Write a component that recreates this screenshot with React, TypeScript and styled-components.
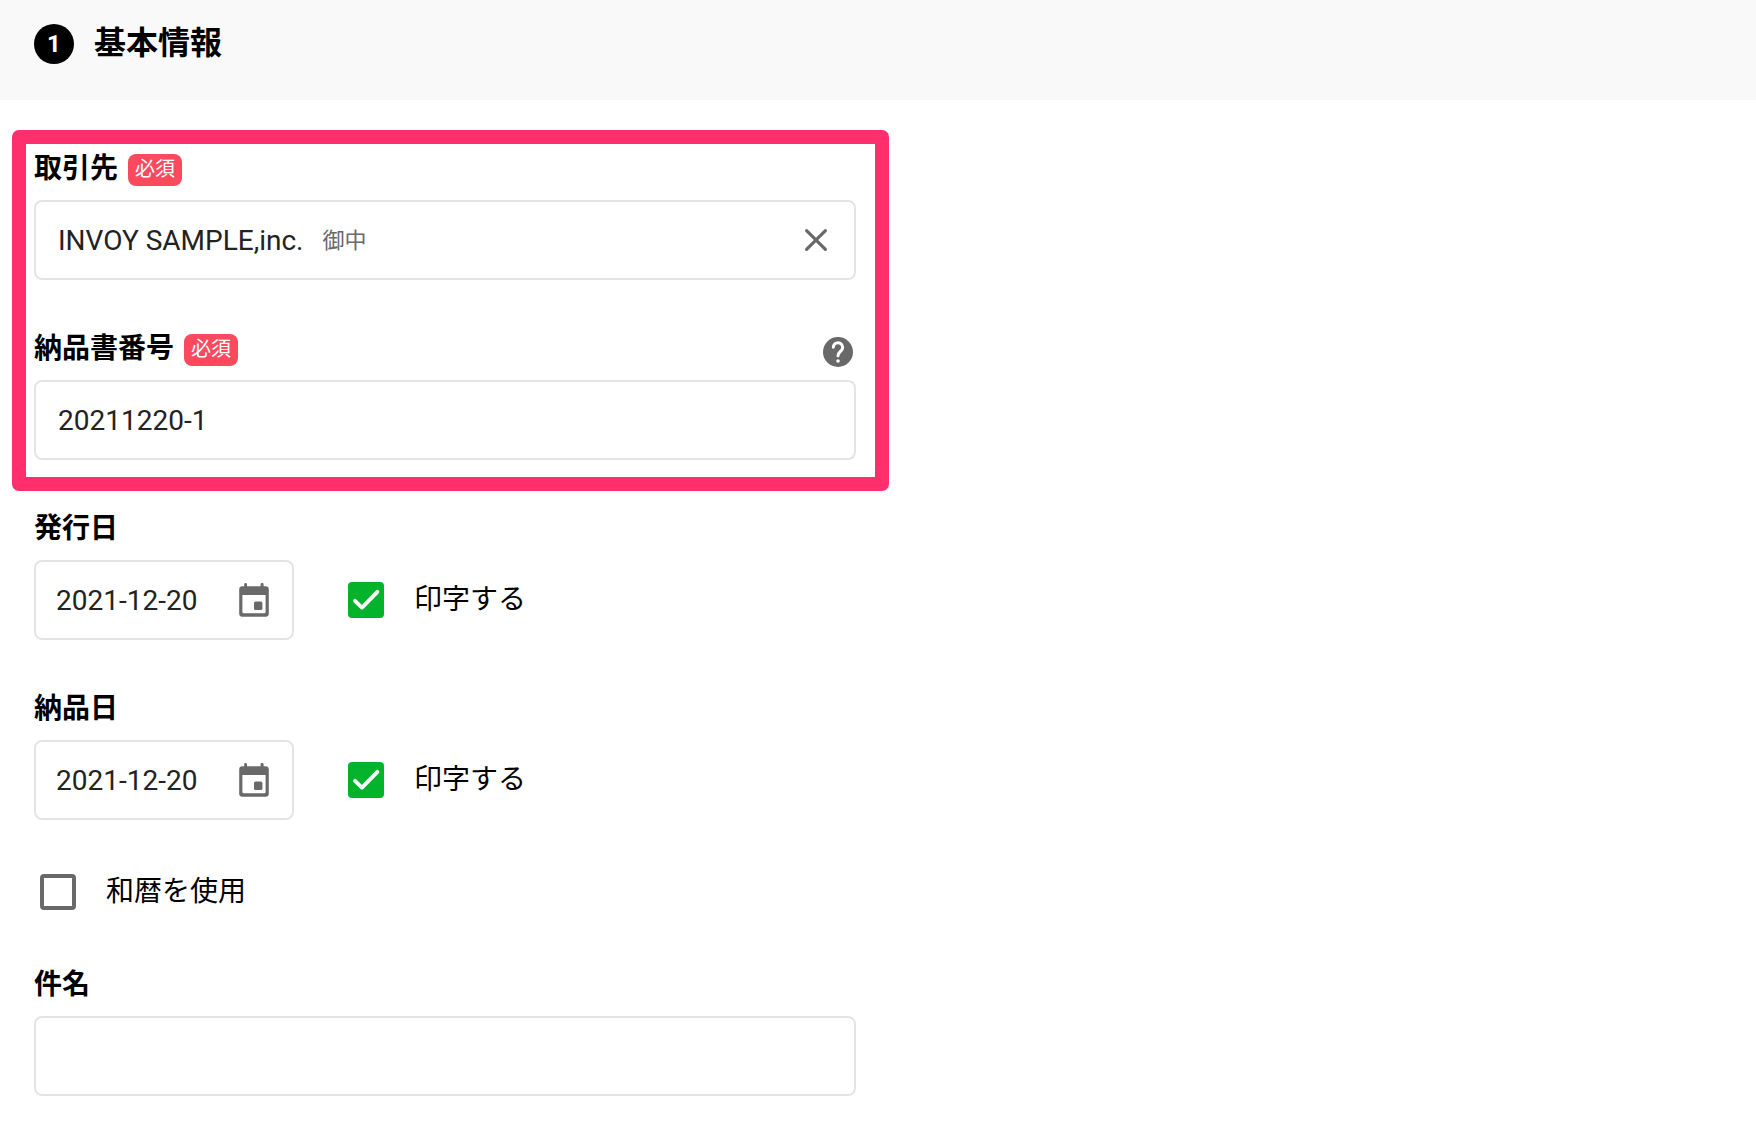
import React, { useState } from "react";
import styled, { createGlobalStyle } from "styled-components";

const color = {
  text: "#000000",
  value: "#222222",
  muted: "#696969",
  line: "#e4e4e4",
  bar: "#f9f9f9",
  required: "#fb4a5e",
  frame: "#ff2f6d",
  green: "#04b32c",
};

const GlobalStyle = createGlobalStyle`
  *, *::before, *::after { box-sizing: border-box; }
  body {
    margin: 0;
    background: #ffffff;
    color: ${color.text};
    font-family: Roboto, "Noto Sans CJK JP", sans-serif;
  }
  button, input { font: inherit; color: inherit; }
`;

const SectionBar = styled.header`
  display: flex;
  align-items: flex-start;
  gap: 20px;
  height: 100px;
  padding: 24px 34px;
  background: ${color.bar};
`;

const StepNumber = styled.span`
  flex: none;
  width: 40px;
  height: 40px;
  border-radius: 50%;
  background: #000000;
  color: #ffffff;
  font-size: 24px;
  font-weight: 700;
  line-height: 40px;
  text-align: center;
`;

const Title = styled.h2`
  margin: 0;
  font-size: 32px;
  font-weight: 700;
  line-height: 38px;
`;

const Form = styled.form`
  display: flex;
  flex-direction: column;
  gap: 50px;
  max-width: 890px;
  padding: 50px 34px 30px;
`;

const Highlight = styled.div`
  position: relative;
  display: flex;
  flex-direction: column;
  gap: 50px;

  &::after {
    content: "";
    position: absolute;
    inset: -20px -33px -31px -22px;
    border: 14px solid ${color.frame};
    border-radius: 7px;
    pointer-events: none;
  }
`;

const Field = styled.div`
  display: flex;
  flex-direction: column;
  gap: 10px;
`;

const LabelRow = styled.div`
  display: flex;
  align-items: center;
  gap: 10px;
  height: 40px;
`;

const Label = styled.label`
  padding-bottom: 2px;
  font-size: 28px;
  font-weight: 700;
  line-height: 36px;
`;

const Required = styled.span`
  height: 32px;
  padding: 0 7px;
  border-radius: 8px;
  background: ${color.required};
  color: #ffffff;
  font-size: 20px;
  line-height: 30px;
`;

const IconButton = styled.button<{ $push?: boolean }>`
  display: grid;
  place-items: center;
  flex: none;
  width: 36px;
  height: 36px;
  margin-left: ${(p) => (p.$push ? "auto" : "0")};
  align-self: ${(p) => (p.$push ? "flex-end" : "auto")};
  padding: 0;
  border: 0;
  background: none;
  color: ${color.muted};
  cursor: pointer;
`;

const Box = styled.div<{ $narrow?: boolean }>`
  display: flex;
  align-items: center;
  width: ${(p) => (p.$narrow ? "260px" : "100%")};
  height: 80px;
  padding: 0 20px 0 ${(p) => (p.$narrow ? 20 : 22)}px;
  border: 2px solid ${color.line};
  border-radius: 8px;
  background: #ffffff;
`;

const TextInput = styled.input<{ $fit?: boolean }>`
  flex: ${(p) => (p.$fit ? "none" : "1")};
  field-sizing: ${(p) => (p.$fit ? "content" : "fixed")};
  min-width: 0;
  height: 76px;
  padding: 0;
  border: 0;
  outline: 0;
  background: none;
  color: ${color.value};
  font-size: 28px;
`;

const Honorific = styled.span`
  flex: 1;
  margin-left: 19px;
  padding-bottom: 4px;
  color: ${color.muted};
  font-size: 22px;
`;

const DateRow = styled.div`
  display: flex;
  align-items: center;
  gap: 54px;
`;

const CheckLabel = styled.label<{ $alone?: boolean }>`
  display: flex;
  align-items: center;
  gap: 30px;
  height: 46px;
  padding: ${(p) => (p.$alone ? "0 0 2px 6px" : "0")};
  font-size: 28px;
  line-height: 36px;
  cursor: pointer;
`;

const CheckHolder = styled.span`
  display: grid;
  flex: none;
  width: 36px;
  height: 36px;

  & > * { grid-area: 1 / 1; }
  & > svg { pointer-events: none; }
`;

const CheckInput = styled.input`
  appearance: none;
  width: 36px;
  height: 36px;
  margin: 0;
  border: 4px solid ${color.muted};
  border-radius: 4px;
  background: #ffffff;
  cursor: pointer;

  &:checked {
    border-color: ${color.green};
    background: ${color.green};
  }
`;

function CloseIcon() {
  return (
    <svg width="24" height="24" viewBox="0 0 24 24" fill="none" stroke="currentColor" strokeWidth="3.2" strokeLinecap="round" aria-hidden="true">
      <path d="M2.6 2.6 21.4 21.4M21.4 2.6 2.6 21.4" />
    </svg>
  );
}

function HelpIcon() {
  return (
    <svg width="36" height="36" viewBox="0 0 24 24" fill="none" aria-hidden="true">
      <circle cx="12" cy="12" r="10" fill="currentColor" />
      <path d="M8.9 8.8a3.1 3.1 0 0 1 6.2.2c0 .9-.4 1.5-1 2.1l-.8.8c-.8.8-1.3 1.5-1.3 2.6" stroke="#ffffff" strokeWidth="2" strokeLinecap="round" />
      <circle cx="12" cy="18" r="1.2" fill="#ffffff" />
    </svg>
  );
}

function CalendarIcon() {
  return (
    <svg width="30" height="34" viewBox="0 0 30 34" fill="currentColor" aria-hidden="true">
      <path
        fillRule="evenodd"
        d="M6.6 0A1.4 1.4 0 0 1 8 1.4V3.3H21.6V1.4a1.5 1.5 0 0 1 3 0V3.3H26.6a3.2 3.2 0 0 1 3.2 3.2V30.6A3.2 3.2 0 0 1 26.6 33.8H3.4A3.2 3.2 0 0 1 .2 30.6V6.5A3.2 3.2 0 0 1 3.4 3.3H5.2V1.4A1.4 1.4 0 0 1 6.6 0ZM3.4 12V29A1.3 1.3 0 0 0 4.7 30.3H25.3A1.3 1.3 0 0 0 26.6 29V12Z"
      />
      <rect x="15" y="18.6" width="8.4" height="8.4" rx="1.6" />
    </svg>
  );
}

function Checkbox({ text, initial, alone }: { text: string; initial: boolean; alone?: boolean }) {
  const [checked, setChecked] = useState(initial);
  return (
    <CheckLabel $alone={alone}>
      <CheckHolder>
        <CheckInput type="checkbox" checked={checked} onChange={(e) => setChecked(e.target.checked)} />
        {checked && (
          <svg width="36" height="36" viewBox="0 0 36 36" fill="none" stroke="#ffffff" strokeWidth="3.8" strokeLinecap="round" strokeLinejoin="round" aria-hidden="true">
            <path d="M7 18.8 14 25.6 29.4 9.8" />
          </svg>
        )}
      </CheckHolder>
      <span>{text}</span>
    </CheckLabel>
  );
}

function DateField({ id, label }: { id: string; label: string }) {
  return (
    <Field>
      <LabelRow>
        <Label htmlFor={id}>{label}</Label>
      </LabelRow>
      <DateRow>
        <Box $narrow>
          <TextInput id={id} type="text" defaultValue="2021-12-20" />
          <IconButton type="button" aria-label={label + "を選択"}>
            <CalendarIcon />
          </IconButton>
        </Box>
        <Checkbox text="印字する" initial />
      </DateRow>
    </Field>
  );
}

export default function App() {
  const [client, setClient] = useState("INVOY SAMPLE,inc.");
  return (
    <>
      <GlobalStyle />
      <SectionBar>
        <StepNumber>1</StepNumber>
        <Title>基本情報</Title>
      </SectionBar>
      <Form onSubmit={(e) => e.preventDefault()}>
        <Highlight>
          <Field>
            <LabelRow>
              <Label htmlFor="client">取引先</Label>
              <Required>必須</Required>
            </LabelRow>
            <Box>
              <TextInput id="client" type="text" value={client} onChange={(e) => setClient(e.target.value)} $fit />
              <Honorific>御中</Honorific>
              <IconButton type="button" aria-label="クリア" onClick={() => setClient("")}>
                <CloseIcon />
              </IconButton>
            </Box>
          </Field>
          <Field>
            <LabelRow>
              <Label htmlFor="number">納品書番号</Label>
              <Required>必須</Required>
              <IconButton type="button" aria-label="ヘルプ" $push>
                <HelpIcon />
              </IconButton>
            </LabelRow>
            <Box>
              <TextInput id="number" type="text" defaultValue="20211220-1" />
            </Box>
          </Field>
        </Highlight>
        <DateField id="issued" label="発行日" />
        <DateField id="delivered" label="納品日" />
        <Checkbox text="和暦を使用" initial={false} alone />
        <Field>
          <LabelRow>
            <Label htmlFor="subject">件名</Label>
          </LabelRow>
          <Box>
            <TextInput id="subject" type="text" />
          </Box>
        </Field>
      </Form>
    </>
  );
}
